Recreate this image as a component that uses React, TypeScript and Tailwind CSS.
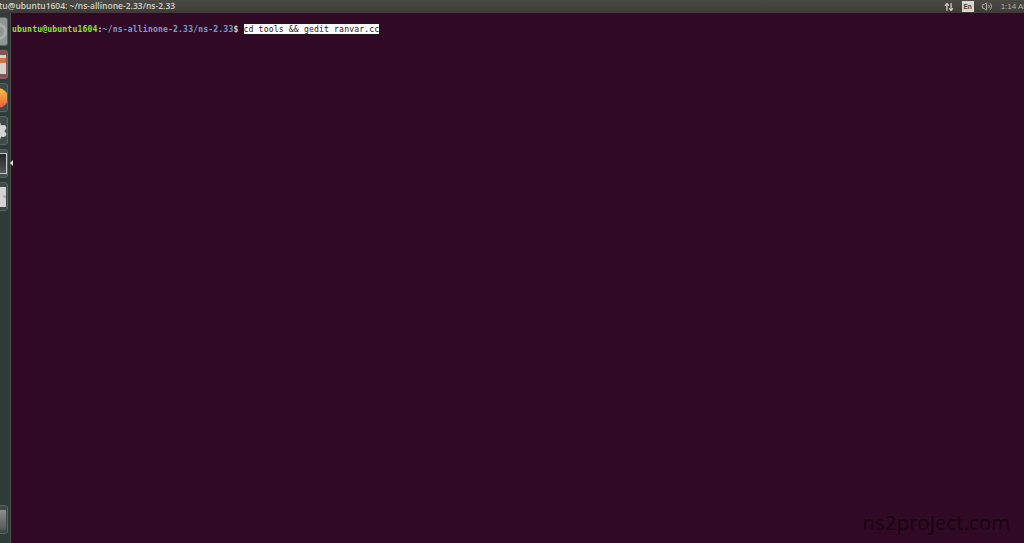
import type { ReactNode } from 'react'
import { ArrowUpDown, Settings, Volume2 } from 'lucide-react'

function Tile({ className, children }: { className: string; children?: ReactNode }) {
  return (
    <div className={`w-[20px] h-[29px] -ml-[12px] shrink-0 rounded-[3px] border border-[#59635f] flex items-center justify-center overflow-hidden ${className}`}>
      {children}
    </div>
  )
}

export default function App() {
  return (
    <div className="w-[1024px] h-[543px] flex flex-col overflow-hidden bg-[#300a24] font-['Liberation_Sans',sans-serif]">
      {/* Top panel */}
      <header className="h-[13px] shrink-0 flex items-center bg-gradient-to-b from-[#4b4a44] to-[#3c3b36] text-[#d5d2c8]">
        <span className="-ml-[1px] text-[8.5px] leading-none font-['Open_Sans',sans-serif] font-semibold whitespace-nowrap">
          tu@ubuntu1604: ~/ns-allinone-2.33/ns-2.33
        </span>
        <div className="ml-auto flex items-center -mr-[6px]">
          <ArrowUpDown className="w-[10px] h-[10px] mr-[8px]" strokeWidth={3} />
          <span className="w-[12px] h-[11px] mr-[7px] bg-[#d8d6ce] text-[#3c3b36] text-[6.5px] leading-[11px] font-bold text-center">En</span>
          <Volume2 className="w-[12px] h-[11px] mr-[8px] text-[#bdbbb2]" strokeWidth={2} />
          <span className="text-[8px] leading-none whitespace-nowrap text-[#b4b2a9]">1:14 AM</span>
        </div>
      </header>

      <div className="flex-1 flex min-h-0">
        {/* Launcher */}
        <aside className="w-[11px] shrink-0 flex flex-col bg-[#2f3a3b] border-r border-[#4d5048] pt-[4px] relative">
          <div className="flex flex-col gap-[4px]">
            <Tile className="bg-[#8f9796]">
              <div className="w-[17px] h-[17px] rounded-full border-[3px] border-[#a9afad]" />
            </Tile>
            <Tile className="bg-[#84565a] border-[#a05a60]">
              <div className="w-[15px] h-[19px] bg-[#d6d2ce]">
                <div className="h-[5px] mt-[3px] bg-[#d3743c]" />
              </div>
            </Tile>
            <Tile className="bg-[#3f4a4a]">
              <div className="w-[20px] h-[20px] shrink-0 rounded-full bg-gradient-to-b from-[#f6c23e] to-[#e9573c]" />
            </Tile>
            <Tile className="bg-[#3f4a4a]">
              <Settings className="w-[20px] h-[20px] shrink-0 fill-[#d2d4d2] text-[#d2d4d2]" />
            </Tile>
            <Tile className="bg-[#46504f]">
              <div className="w-[17px] h-[21px] shrink-0 border border-[#c4c8c6] bg-gradient-to-b from-[#23272a] to-[#55595a]" />
            </Tile>
            <Tile className="bg-[#3f4a4a]">
              <div className="w-[15px] h-[20px] shrink-0 bg-[#d2d4d2] flex items-start">
                <div className="w-[3px] h-[3px] ml-[12px] mt-[8px] rounded-full bg-[#d98fd0]" />
              </div>
            </Tile>
          </div>
          <div className="absolute right-[-3px] top-[147px] w-0 h-0 border-y-[3px] border-y-transparent border-r-[3px] border-r-[#e2e4e2]" />
          <div className="mt-auto mb-[9px]">
            <Tile className="bg-[#3d4847]">
              <div className="w-[15px] h-[20px] shrink-0 bg-gradient-to-b from-[#8d8f8d] to-[#55585a]" />
            </Tile>
          </div>
        </aside>

        {/* Terminal */}
        <main className="flex-1 pt-[11px] pl-[1px] relative">
          <p className="text-[8.15px] tracking-[0.14px] leading-[10px] font-bold whitespace-pre font-['DejaVu_Sans_Mono',monospace]">
            <span className="text-[#8ae234]">ubuntu@ubuntu1604</span>
            <span className="text-[#d3d7cf]">:</span>
            <span className="text-[#729fcf]">~/ns-allinone-2.33/ns-2.33</span>
            <span className="text-[#d3d7cf]">$ </span>
            <span className="bg-white text-[#300a24] font-normal">cd tools &amp;&amp; gedit ranvar.cc</span>
          </p>
          <span className="absolute right-[14px] bottom-[11px] text-[20.5px] leading-none text-[#17040f] font-['Open_Sans',sans-serif]">
            ns2project.com
          </span>
        </main>
      </div>
    </div>
  )
}
